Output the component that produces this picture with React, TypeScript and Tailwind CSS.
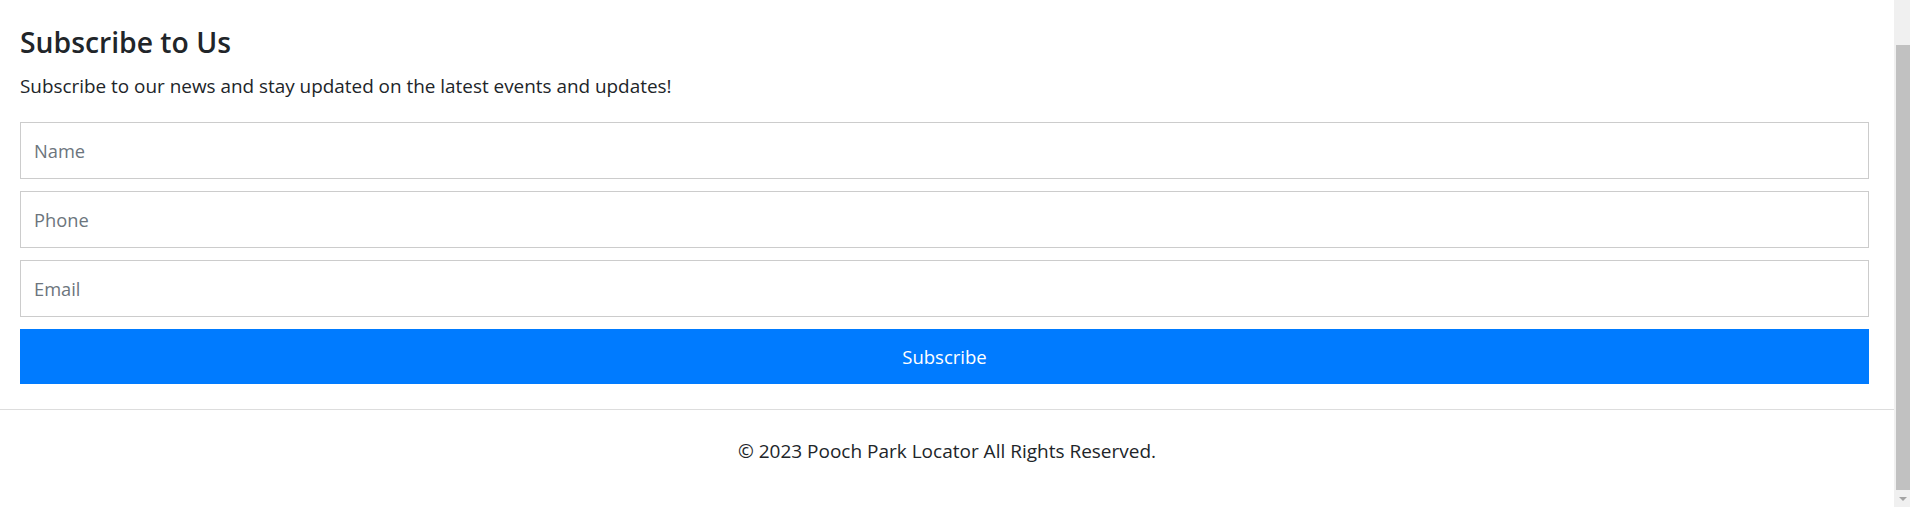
import { useState } from 'react';

function FakeScrollbar() {
  return (
    <div className="w-4 shrink-0 bg-[#f0f0f0] flex flex-col">
      <div className="h-[45px]" />
      <div className="pl-[2px] h-[445px]">
        <div className="h-full bg-[#c1c1c1]" />
      </div>
      <div className="flex-1 flex items-center justify-center pl-[2px]">
        <div className="w-0 h-0 border-l-[4px] border-r-[4px] border-t-[4px] border-l-transparent border-r-transparent border-t-[#a3a3a3]" />
      </div>
    </div>
  );
}

export default function App() {
  const [form, setForm] = useState({ name: '', phone: '', email: '' });

  const fields: { key: 'name' | 'phone' | 'email'; label: string; type: string }[] = [
    { key: 'name', label: 'Name', type: 'text' },
    { key: 'phone', label: 'Phone', type: 'tel' },
    { key: 'email', label: 'Email', type: 'email' },
  ];

  return (
    <div className="flex h-[507px] w-full overflow-hidden bg-white text-[#212529] font-['Open_Sans',sans-serif]">
      <div className="flex-1 flex flex-col min-w-0">
        <section className="pl-5 pr-[25px] pt-[23px]">
          <h2 className="text-[28.3px] font-semibold leading-[38px]">Subscribe to Us</h2>
          <p className="mt-[12px] text-[18.9px] leading-[27px]">
            Subscribe to our news and stay updated on the latest events and updates!
          </p>
          <form className="mt-[22px] flex flex-col gap-3" onSubmit={(e) => e.preventDefault()}>
            {fields.map((f) => (
              <input
                key={f.key}
                type={f.type}
                placeholder={f.label}
                value={form[f.key]}
                onChange={(e) => setForm({ ...form, [f.key]: e.target.value })}
                className="h-[57px] w-full border border-[#cccccc] px-[13px] text-[18.3px] text-[#495057] placeholder:text-[#6c757d] outline-none"
              />
            ))}
            <button
              type="submit"
              className="h-[55px] w-full bg-[#007bff] text-white text-[18.5px]"
            >
              Subscribe
            </button>
          </form>
        </section>
        <footer className="mt-[25px] border-t border-[#dddddd] pt-[28px] text-center">
          <p className="text-[19px] leading-[27px]">© 2023 Pooch Park Locator All Rights Reserved.</p>
        </footer>
      </div>
      <FakeScrollbar />
    </div>
  );
}
